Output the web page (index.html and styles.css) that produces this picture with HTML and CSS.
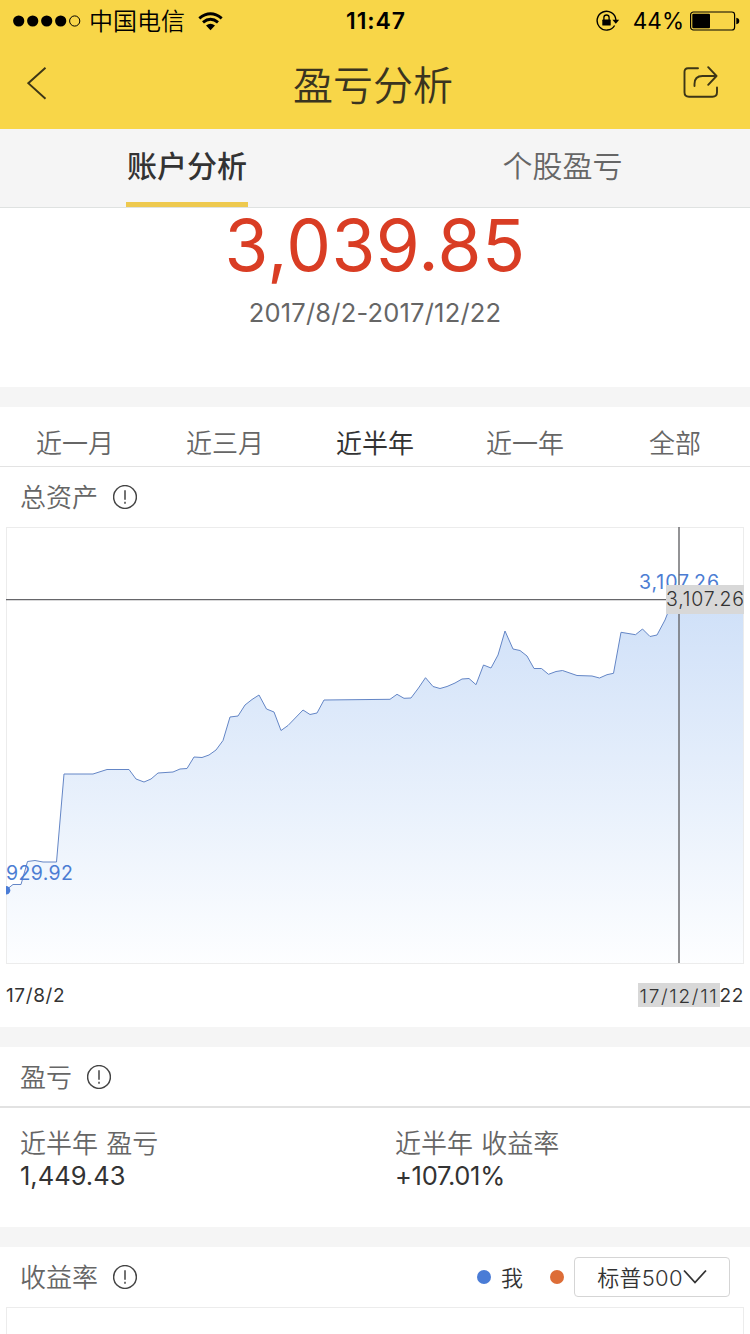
FILE: index.html
```html
<!DOCTYPE html>
<html lang="zh-CN">
<head>
  <meta charset="UTF-8">
  <title>盈亏分析</title>
  <link rel="stylesheet" href="styles.css">
</head>
<body>

<header class="header">
  <div class="status-bar">
    <div class="status-left">
      <svg width="68" height="12" viewBox="0 0 68 12">
        <circle cx="5.7" cy="6" r="5.6"/>
        <circle cx="19.7" cy="6" r="5.6"/>
        <circle cx="33.7" cy="6" r="5.6"/>
        <circle cx="47.7" cy="6" r="5.6"/>
        <circle cx="61.7" cy="6" r="5.1" fill="none" stroke="#000"/>
      </svg>
      <span class="carrier">中国电信</span>
      <svg class="wifi" width="25" height="19" viewBox="0 0 25 19">
        <path d="M1.3 6.3Q12.5-2.8 23.7 6.3M5 10.4Q12.5 4.2 20 10.4" fill="none" stroke="#000" stroke-width="3"/>
        <path d="M8 13.6Q12.5 10 17 13.6L12.5 18.2Z"/>
      </svg>
    </div>
    <span class="time">11:47</span>
    <div class="status-right">
      <svg width="24" height="22" viewBox="0 0 24 22">
        <path d="M18.6 15.5A9.4 9.4 0 1 1 19.9 10" fill="none" stroke="#000" stroke-width="1.4"/>
        <path d="M16.4 9.8H23.2L19.8 13.8Z"/>
        <rect x="6.3" y="9.6" width="8.4" height="6" rx=".6"/>
        <path d="M7.9 10V7.6a2.6 2.6 0 0 1 5.2 0V10" fill="none" stroke="#000" stroke-width="1.3"/>
      </svg>
      <span class="percent">44%</span>
      <svg width="50" height="20" viewBox="0 0 50 20">
        <rect x=".6" y="1" width="44" height="18" rx="2.8" fill="none" stroke="#000" stroke-width="1.2"/>
        <rect x="2.3" y="2.8" width="17.7" height="14.4" rx="1"/>
        <path d="M46.3 6.7q3 .6 3 3.3t-3 3.3Z"/>
      </svg>
    </div>
  </div>
  <div class="nav">
    <svg width="20" height="34" viewBox="0 0 20 34">
      <path d="M18.5 1.7L1.3 17.2L18.5 32.7" fill="none" stroke="#3d3616" stroke-width="1.9"/>
    </svg>
    <h1 class="nav-title">盈亏分析</h1>
    <svg width="36" height="34" viewBox="0 0 36 34">
      <path d="M15 2.3H5Q1.5 2.3 1.5 5.8V26.3Q1.5 30.8 6 30.8H29.5Q34 30.8 34 26.3V21.5M11.5 20V18Q11.5 10 19.5 10H33M25.2 1.2L33.5 10L25.2 18.8" fill="none" stroke="#3d3616" stroke-width="1.9" stroke-linecap="round" stroke-linejoin="round"/>
    </svg>
  </div>
</header>

<nav class="tabs">
  <div class="tab active"><span>账户分析</span></div>
  <div class="tab"><span>个股盈亏</span></div>
</nav>

<section class="summary">
  <div class="amount">3,039.85</div>
  <div class="period">2017/8/2-2017/12/22</div>
</section>

<section class="panel">
  <div class="ranges">
    <span>近一月</span>
    <span>近三月</span>
    <span class="active">近半年</span>
    <span>近一年</span>
    <span>全部</span>
  </div>
  <div class="panel-title">
    <span class="label">总资产</span>
    <svg class="info" viewBox="0 0 24 24"><circle cx="12" cy="12" r="11.4"/><path d="M12 5.2V14.8M12 16.8V18.8"/></svg>
  </div>
  <svg class="chart" width="738" height="437" viewBox="6 527 738 437">
    <defs>
      <linearGradient id="area" gradientUnits="userSpaceOnUse" x1="0" y1="600" x2="0" y2="964">
        <stop offset="0" stop-color="#cfe0f8"/>
        <stop offset="1" stop-color="#fdfeff"/>
      </linearGradient>
    </defs>
    <path fill="url(#area)" d="M6 964V890L13 884.5 21 884.5 27.5 861.5 35 860.5 43 862 56.5 862 64 774 93 774 107 769.5 129 769.5 136 779 144 782 151 779 158 773 173 772 180 769 187 768.5 194 757 202 757.5 209 755 216 750 223 740.5 230 717 238 716 245 705 252 699.5 259 695 266.5 709 274 712 281 730.5 288 725.5 303 710 310 714.5 317 713 324 700 390 699.3 397 694.3 404 698.3 411 698 418.5 688 425.5 677.7 433 686.5 440 688.5 447 686.5 455 683 462 679 469 678.5 476 684.7 483.5 665 491 668 498 655 505 631 513 649 520 650.5 527 656 534 668.5 541.5 668.5 548.5 674.3 556 671.5 562.5 670.5 577 675.5 592 676 599.5 678 607 674.7 613.5 673.3 621 632.3 635.5 634.7 642.5 629 650 636.5 657 635 665 620 672 602 679 600 744 606V964Z"/>
    <polyline class="line" points="6,890 13,884.5 21,884.5 27.5,861.5 35,860.5 43,862 56.5,862 64,774 93,774 107,769.5 129,769.5 136,779 144,782 151,779 158,773 173,772 180,769 187,768.5 194,757 202,757.5 209,755 216,750 223,740.5 230,717 238,716 245,705 252,699.5 259,695 266.5,709 274,712 281,730.5 288,725.5 303,710 310,714.5 317,713 324,700 390,699.3 397,694.3 404,698.3 411,698 418.5,688 425.5,677.7 433,686.5 440,688.5 447,686.5 455,683 462,679 469,678.5 476,684.7 483.5,665 491,668 498,655 505,631 513,649 520,650.5 527,656 534,668.5 541.5,668.5 548.5,674.3 556,671.5 562.5,670.5 577,675.5 592,676 599.5,678 607,674.7 613.5,673.3 621,632.3 635.5,634.7 642.5,629 650,636.5 657,635 665,620 672,602 679,600 744,606"/>
    <rect class="frame" x="6.5" y="527.5" width="737" height="436"/>
    <circle cx="6" cy="890.3" r="4.3" fill="#4a7cd6"/>
    <text class="value" x="6" y="880" textLength="67">929.92</text>
    <text class="value" x="639" y="589" textLength="80">3,107.26</text>
    <path class="cross" d="M6 599.6H744M679 527V963"/>
    <rect x="666" y="585" width="78" height="29" fill="#d8d8d8"/>
    <text class="mark" x="666" y="606" textLength="78">3,107.26</text>
  </svg>
  <div class="x-axis">
    <span>17/8/2</span>
    <span>17/12/22</span>
    <span class="x-mark">17/12/11</span>
  </div>
</section>

<section class="panel">
  <div class="panel-title bordered">
    <span class="label">盈亏</span>
    <svg class="info" viewBox="0 0 24 24"><circle cx="12" cy="12" r="11.4"/><path d="M12 5.2V14.8M12 16.8V18.8"/></svg>
  </div>
  <div class="stats">
    <div class="stat">
      <div class="stat-label">近半年 盈亏</div>
      <div class="stat-value">1,449.43</div>
    </div>
    <div class="stat">
      <div class="stat-label">近半年 收益率</div>
      <div class="stat-value rate">+107.01%</div>
    </div>
  </div>
</section>

<section class="panel">
  <div class="panel-title">
    <span class="label">收益率</span>
    <svg class="info" viewBox="0 0 24 24"><circle cx="12" cy="12" r="11.4"/><path d="M12 5.2V14.8M12 16.8V18.8"/></svg>
    <div class="legend">
      <i class="dot blue"></i>
      <span class="me">我</span>
      <i class="dot orange"></i>
      <div class="select">
        <span>标普500</span>
        <svg width="24" height="16" viewBox="0 0 24 16"><path d="M1 1.5L12 13.5L23 1.5" fill="none" stroke="#333" stroke-width="1.8"/></svg>
      </div>
    </div>
  </div>
  <div class="rate-chart"></div>
</section>

</body>
</html>
```
FILE: styles.css
```css
* {
  box-sizing: border-box;
}
body {
  margin: 0;
  width: 750px;
  height: 1334px;
  overflow: hidden;
  background-color: #f5f5f5;
  color: #666;
  font-family: Inter, "Noto Sans CJK SC", sans-serif;
  font-size: 26px;
  font-weight: 350;
}
svg {
  display: block;
  flex: none;
}
.header {
  height: 129px;
  background-color: #f8d648;
  color: #000;
}
.status-bar {
  display: grid;
  grid-template-columns: 1fr auto 1fr;
  align-items: center;
  height: 41px;
  padding: 0 11px 0 13px;
  font-size: 24px;
  line-height: 40px;
}
.status-left, .status-right {
  display: flex;
  align-items: center;
}
.status-right {
  justify-content: flex-end;
}
.carrier {
  padding-top: 2px;
  margin-left: 8px;
}
.wifi {
  margin-left: 13px;
}
.time {
  font-size: 23px;
  font-weight: 600;
  letter-spacing: .9px;
}
.percent {
  margin: 0 6px 0 13px;
  font-size: 22.5px;
  font-weight: 400;
}
.status-right svg:last-child {
  margin-right: -1px;
}
.nav {
  display: grid;
  grid-template-columns: 40px 1fr 40px;
  align-items: center;
  height: 84px;
  padding: 0 27px;
}
.nav-title {
  margin: 0;
  padding: 5px 4px 0 0;
  color: #3a3420;
  font-size: 40px;
  font-weight: 350;
  line-height: 60px;
  text-align: center;
}
.tabs {
  display: flex;
  height: 79px;
  border-bottom: 1px solid #dfe2e1;
  font-size: 30px;
}
.tab {
  flex: 1;
  display: flex;
  justify-content: center;
}
.tab span {
  height: 78px;
  padding: 0 1px;
  line-height: 75px;
}
.tab.active span {
  margin-right: 1px;
  border-bottom: 5px solid #eec94f;
  color: #333;
  font-weight: 500;
}
.summary {
  height: 179px;
  background-color: #fff;
  text-align: center;
}
.amount {
  height: 84px;
  color: #d93d24;
  font-size: 71px;
  font-weight: 400;
  letter-spacing: .4px;
  line-height: 74px;
}
.period {
  font-size: 25.5px;
  font-weight: 400;
  letter-spacing: .2px;
  line-height: 42px;
}
.panel {
  margin-top: 20px;
  background-color: #fff;
}
.summary + .panel {
  height: 620px;
}
.ranges {
  display: flex;
  height: 60px;
  border-bottom: 1px solid #e3e3e3;
  line-height: 74px;
}
.ranges span {
  flex: 1;
  text-align: center;
}
.ranges .active {
  color: #333;
  font-weight: 400;
}
.panel-title {
  display: flex;
  align-items: center;
  height: 60px;
  padding: 0 20px;
}
.panel-title.bordered {
  height: 61px;
  border-bottom: 2px solid #e2e2e2;
}
.label {
  padding-bottom: 3px;
}
.info {
  width: 24px;
  height: 24px;
  margin-left: 15px;
  fill: none;
  stroke: #444;
  stroke-width: 1.5;
}
.chart {
  margin: 0 6px;
  font-size: 19.5px;
  font-weight: 400;
}
.line {
  fill: none;
  stroke: #6486c6;
  stroke-width: 1;
}
.frame {
  fill: none;
  stroke: #ececec;
}
.value {
  fill: #4c7dd3;
}
.cross {
  fill: none;
  stroke: #66666a;
  stroke-width: 1.4;
}
.mark {
  fill: #333;
  font-weight: 350;
}
.x-axis {
  position: relative;
  display: flex;
  justify-content: space-between;
  height: 63px;
  padding: 0 6px;
  color: #333;
  font-size: 19px;
  font-weight: 400;
  letter-spacing: .6px;
  line-height: 64px;
}
/* date of the crosshair, drawn over the last axis label */
.x-mark {
  position: absolute;
  top: 19px;
  right: 24px;
  width: 82px;
  height: 24px;
  background-color: #d8d8d8;
  color: #333;
  font-weight: 350;
  letter-spacing: 1.7px;
  line-height: 28px;
  text-align: center;
  white-space: nowrap;
}
.x-axis .x-mark {
  right: 24px;
  transform: translateX(-6px);
}
.stats {
  display: grid;
  grid-template-columns: 375px 1fr;
  height: 119px;
  padding: 19px 0 0 20px;
}
.stat-label {
  line-height: 34px;
  word-spacing: 1px;
}
.stat-value {
  color: #333;
  font-size: 25.5px;
  font-weight: 400;
  line-height: 29px;
}
.rate {
  letter-spacing: -.3px;
}
.legend {
  display: flex;
  align-items: center;
  margin-left: auto;
  color: #333;
  font-size: 22px;
}
.dot {
  width: 14px;
  height: 14px;
  border-radius: 50%;
}
.blue {
  background-color: #4a7cd6;
}
.orange {
  background-color: #dd6d37;
}
.me {
  margin: 0 27px 0 10px;
  padding-bottom: 2px;
}
.select {
  display: flex;
  align-items: center;
  justify-content: center;
  width: 156px;
  height: 40px;
  margin-left: 10px;
  border: 1px solid #d5d5d5;
  border-radius: 4px;
}
.select span {
  padding-bottom: 2px;
  letter-spacing: .3px;
}
.rate-chart {
  height: 40px;
  margin: 0 6px;
  border: 1px solid #ececec;
}
```
